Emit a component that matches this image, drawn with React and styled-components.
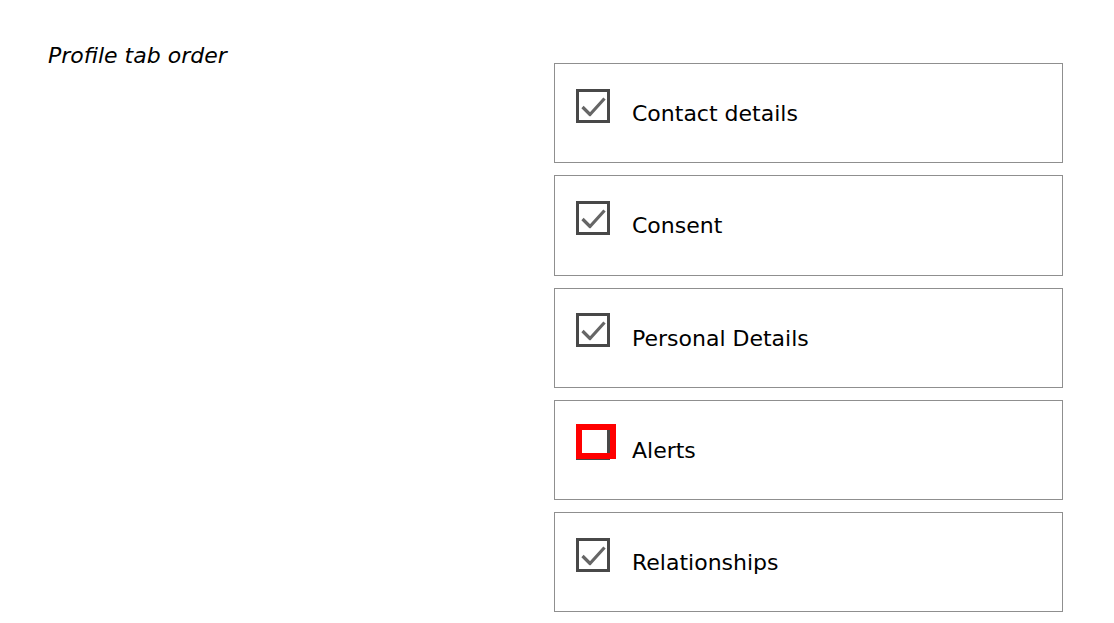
import React from 'react'
import styled, { createGlobalStyle } from 'styled-components'

const GlobalStyle = createGlobalStyle`
	body {
		margin: 0;
		background: #fff;
		font-family: 'DejaVu Sans', Verdana, sans-serif;
		color: #000;
	}
`

const Page = styled.div`
	display: flex;
	padding: 43px 0 0 48px;
`

const Label = styled.div`
	width: 506px;
	font-size: 22px;
	font-style: italic;
	line-height: 26px;
`

const List = styled.div`
	display: flex;
	flex-direction: column;
	gap: 12px;
	margin-top: 20px;
	width: 509px;
`

const Card = styled.label`
	box-sizing: border-box;
	height: 100.3px;
	border: 1px solid #8f8f8f;
	display: flex;
	align-items: center;
	padding-left: 21px;
`

const Box = styled.span`
	position: relative;
	width: 34px;
	height: 34px;
	margin-top: -15px;
	margin-right: 22px;
	flex-shrink: 0;
	${props =>
		props.focused &&
		`
			&::after {
				content: '';
				position: absolute;
				left: 0;
				top: -2px;
				width: 40px;
				height: 35px;
				box-sizing: border-box;
				border: 6px solid #ff0000;
			}
		`};
`

const Text = styled.span`
	font-size: 22px;
	margin-top: 1px;
`

const tabs = [
	{ name: 'Contact details', checked: true },
	{ name: 'Consent', checked: true },
	{ name: 'Personal Details', checked: true },
	{ name: 'Alerts', checked: false, focused: true },
	{ name: 'Relationships', checked: true }
]

const CheckIcon = ({ checked }) => (
	<svg width="34" height="34" viewBox="0 0 34 34">
		<rect x="1.5" y="1.5" width="31" height="31" fill="#fff" stroke="#484848" strokeWidth="3" />
		{checked && (
			<path d="M6.5 18 L14 25.5 L28.5 9.5" fill="none" stroke="#666" strokeWidth="3.2" strokeLinejoin="round" />
		)}
	</svg>
)

const App = () => (
	<>
		<GlobalStyle />
		<Page>
			<Label>Profile tab order</Label>
			<List>
				{tabs.map(tab => (
					<Card key={tab.name}>
						<Box focused={tab.focused}>
							<CheckIcon checked={tab.checked} />
						</Box>
						<Text>{tab.name}</Text>
					</Card>
				))}
			</List>
		</Page>
	</>
)

export default App
